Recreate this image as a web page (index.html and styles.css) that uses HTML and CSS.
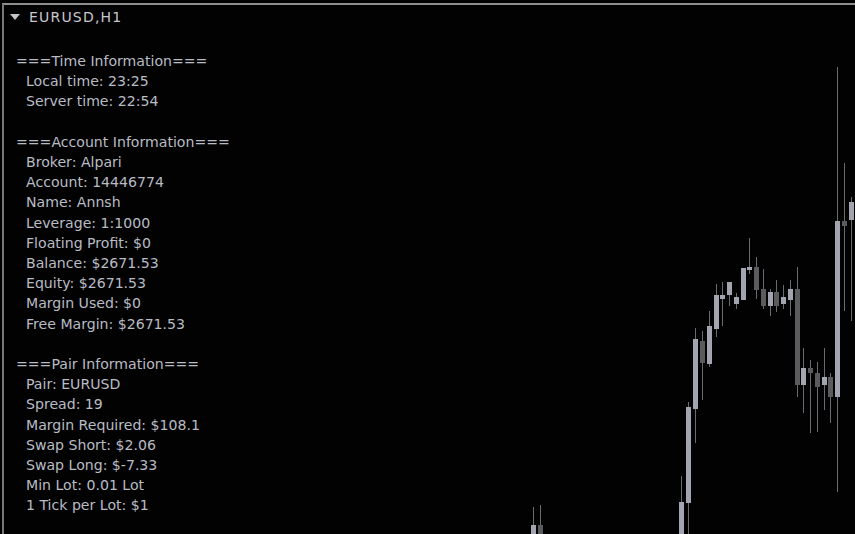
FILE: index.html
```html
<!DOCTYPE html>
<html lang="en">
<head>
  <meta charset="utf-8" />
  <title>EURUSD,H1</title>
  <link rel="stylesheet" href="styles.css">
</head>
<body>
  <div class="screen">
    <svg class="candles" id="candles" width="855" height="534" viewBox="0 0 855 534"></svg>
    <div class="chart">
      <div class="title">
        <svg class="arrow" width="10" height="6" viewBox="0 0 10 6"><path d="M0 0H10L5 6Z" fill="#c4c4c4"/></svg>
        <span>EURUSD,H1</span>
      </div>
      <div class="info">
        <div class="section">
          <div class="head">===Time Information===</div>
          <div class="row">Local time: 23:25</div>
          <div class="row">Server time: 22:54</div>
        </div>
        <div class="section">
          <div class="head">===Account Information===</div>
          <div class="row">Broker: Alpari</div>
          <div class="row">Account: 14446774</div>
          <div class="row">Name: Annsh</div>
          <div class="row">Leverage: 1:1000</div>
          <div class="row">Floating Profit: $0</div>
          <div class="row">Balance: $2671.53</div>
          <div class="row">Equity: $2671.53</div>
          <div class="row">Margin Used: $0</div>
          <div class="row">Free Margin: $2671.53</div>
        </div>
        <div class="section">
          <div class="head">===Pair Information===</div>
          <div class="row">Pair: EURUSD</div>
          <div class="row">Spread: 19</div>
          <div class="row">Margin Required: $108.1</div>
          <div class="row">Swap Short: $2.06</div>
          <div class="row">Swap Long: $-7.33</div>
          <div class="row">Min Lot: 0.01 Lot</div>
          <div class="row">1 Tick per Lot: $1</div>
        </div>
      </div>
    </div>
  </div>

  <script>
    // x, body top, body bottom, wick top, wick bottom, light?
    const bars = [
      [531, 525, 534, 507, 534, 1],
      [538, 525, 534, 505, 534, 0],
      [679, 502, 534, 476, 534, 1],
      [686, 407, 503, 402, 534, 1],
      [693, 339, 409, 328, 443, 1],
      [700, 341, 363, 331, 400, 0],
      [707, 326, 364, 311, 367, 1],
      [714, 295, 329, 284, 337, 1],
      [720, 295, 299, 282, 326, 1],
      [727, 282, 295, 282, 306, 1],
      [734, 297, 304, 293, 309, 1],
      [741, 268, 300, 268, 300, 1],
      [747, 267, 270, 238, 274, 1],
      [754, 267, 290, 257, 299, 0],
      [761, 289, 306, 269, 309, 0],
      [768, 292, 306, 289, 316, 1],
      [774, 292, 306, 280, 312, 0],
      [781, 297, 304, 285, 309, 1],
      [788, 289, 300, 280, 316, 1],
      [795, 289, 385, 267, 397, 0],
      [801, 368, 385, 348, 413, 1],
      [808, 368, 373, 360, 433, 0],
      [815, 373, 387, 362, 432, 0],
      [822, 377, 385, 348, 410, 1],
      [828, 377, 397, 373, 423, 0],
      [835, 221, 397, 67, 492, 1],
      [842, 221, 226, 163, 311, 0],
      [849, 202, 220, 197, 321, 1],
    ];

    const svg = document.getElementById('candles');
    const ns = 'http://www.w3.org/2000/svg';

    function rect(x, y, w, h, cls) {
      const r = document.createElementNS(ns, 'rect');
      r.setAttribute('x', x);
      r.setAttribute('y', y);
      r.setAttribute('width', w);
      r.setAttribute('height', h);
      r.setAttribute('class', cls);
      svg.appendChild(r);
    }

    bars.forEach(([x, top, bottom, high, low, light]) => {
      rect(x + 2, high, 1, low - high, 'wick');
      rect(x, top, 5, Math.max(bottom - top, 2), light ? 'body up' : 'body down');
    });
  </script>
</body>
</html>
```

FILE: styles.css
```css
body {
  margin: 0;
  background: #000;
  font-family: "DejaVu Sans", Verdana, sans-serif;
  color: #b9bcc4;
}
.screen {
  position: relative;
  width: 855px;
  height: 534px;
  overflow: hidden;
  background: #020203;
}
.candles {
  position: absolute;
  top: 0;
  left: 0;
}
.candles .wick {
  fill: #6a6b70;
}
.candles .up {
  fill: #a2a5b0;
}
.candles .down {
  fill: #5b5b5e;
}
.chart {
  position: relative;
  margin: 3px 0 0 2px;
  height: 531px;
  border-top: 2px solid #8e8e90;
  border-left: 2px solid #77777a;
  box-sizing: border-box;
}
.title {
  display: flex;
  align-items: center;
  gap: 9px;
  height: 24px;
  padding-left: 6px;
  font-size: 14px;
  letter-spacing: 1.2px;
  color: #c6c8ce;
}
.arrow {
  flex: none;
}
.info {
  margin-top: 22px;
  padding-left: 12px;
  font-size: 14.1px;
  line-height: 20.2px;
}
.section {
  margin-bottom: 20.2px;
}
.row {
  padding-left: 10px;
}
```
